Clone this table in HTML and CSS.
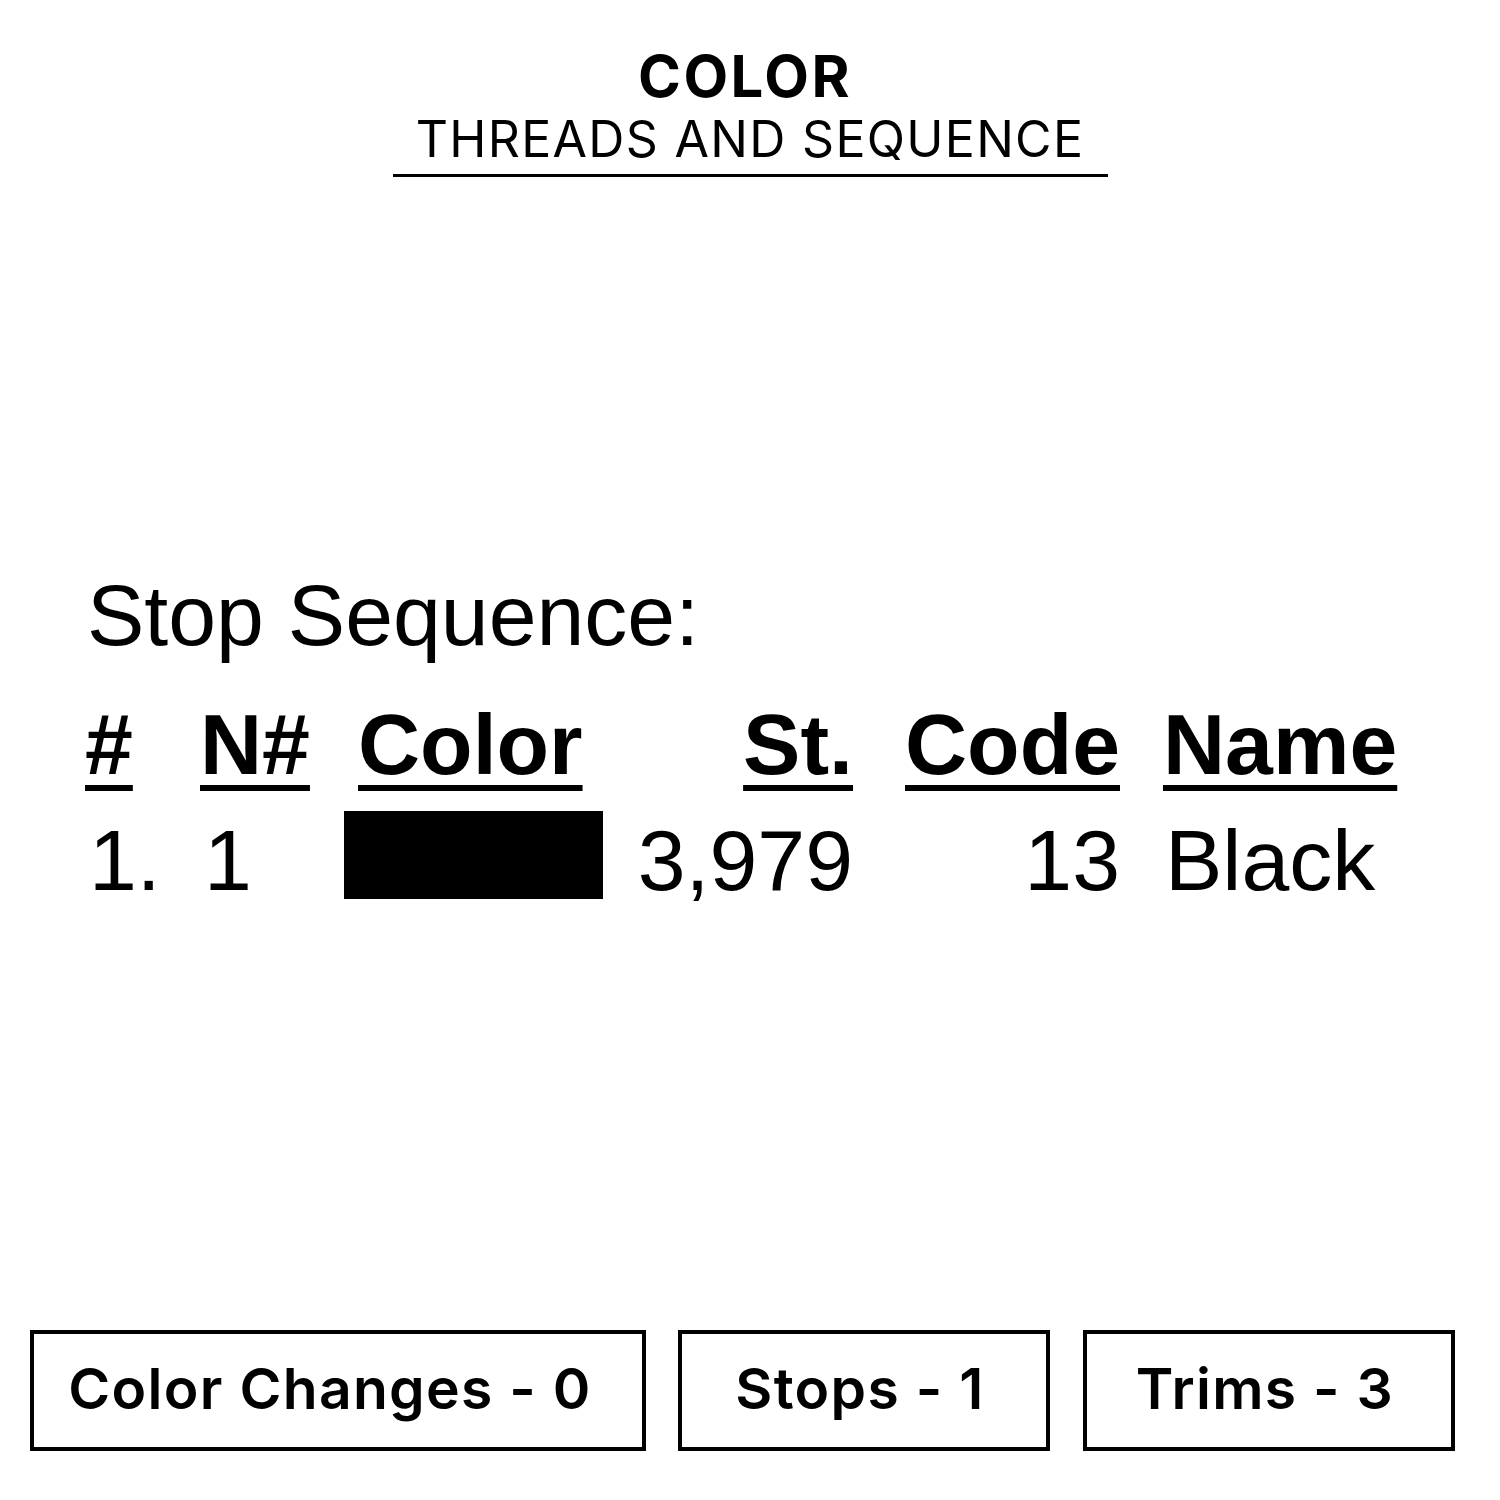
FILE: index.html
```html
<!DOCTYPE html>
<html>
<head>
<meta charset="utf-8">
<link rel="stylesheet" href="styles.css">
</head>
<body>
<div class="page">
  <header class="title">
    <div class="title-inner">
      <div class="title-main">COLOR</div>
      <div class="title-sub">THREADS AND SEQUENCE</div>
    </div>
  </header>

  <section class="seq">
    <div class="seq-label">Stop Sequence:</div>
    <div class="seq-grid">
      <div class="th"><span class="u">#</span></div>
      <div class="th"><span class="u">N#</span></div>
      <div class="th th-color"><span class="u">Color</span></div>
      <div class="th right"><span class="u">St.</span></div>
      <div class="th right"><span class="u">Code</span></div>
      <div class="th th-name"><span class="u">Name</span></div>

      <div class="td">1.</div>
      <div class="td">1</div>
      <div class="td"><div class="swatch"></div></div>
      <div class="td right">3,979</div>
      <div class="td right">13</div>
      <div class="td th-name">Black</div>
    </div>
  </section>

  <section class="stats">
    <div class="stat stat-wide">Color Changes - 0</div>
    <div class="stat">Stops - 1</div>
    <div class="stat">Trims - 3</div>
  </section>
</div>
</body>
</html>
```

FILE: styles.css
```css
html, body {
  margin: 0;
  padding: 0;
  background: #fff;
  color: #000;
}
.page {
  width: 1500px;
  height: 1500px;
  padding-top: 47px;
  box-sizing: border-box;
  display: flex;
  flex-direction: column;
}
.title {
  display: flex;
  justify-content: center;
}
.title-inner {
  display: flex;
  flex-direction: column;
  align-items: center;
  width: 715px;
  margin-left: 0;
  border-bottom: 3px solid #000;
  padding-bottom: 10px;
  font-family: Inter, "Noto Sans", sans-serif;
}
.title-main {
  font-size: 58px;
  line-height: 58px;
  font-weight: 700;
  margin-left: -10px;
  letter-spacing: 2.5px;
}
.title-sub {
  font-size: 50px;
  line-height: 50px;
  font-weight: 400;
  margin-top: 9px;
  margin-left: 0;
  letter-spacing: 1.3px;
}
.seq {
  margin-top: 395px;
  padding-left: 85px;
  font-family: "Liberation Sans", Arial, sans-serif;
  font-size: 86px;
  line-height: 86px;
}
.seq-label {
  padding-left: 2px;
}
.seq-grid {
  margin-top: 43px;
  display: grid;
  grid-template-columns: 115px 144px 276px 233px 267px auto;
  row-gap: 30px;
}
.th {
  font-weight: 700;
}
.u {
  text-decoration: underline;
  text-decoration-thickness: 6px;
  text-underline-offset: 11px;
}
.th-color {
  padding-left: 14px;
}
.th-name {
  padding-left: 43px;
}
.right {
  text-align: right;
}
.td {
  padding-left: 4px;
}
.td.right {
  padding-left: 0;
}
.td.th-name {
  padding-left: 45px;
}
.swatch {
  width: 259px;
  height: 88px;
  margin-top: -6px;
  margin-left: -4px;
  background: #000;
}
.stats {
  margin-top: 427px;
  padding-left: 30px;
  display: flex;
  gap: 33px;
  font-family: Inter, "Noto Sans", sans-serif;
}
.stat {
  width: 372px;
  height: 121px;
  box-sizing: border-box;
  border: 4px solid #000;
  display: flex;
  align-items: center;
  justify-content: center;
  font-size: 57px;
  font-weight: 600;
  letter-spacing: 1.3px;
  padding-right: 8px;
  padding-bottom: 4px;
}
.stat-wide {
  width: 616px;
  margin-right: -1px;
  padding-right: 16px;
}
```
